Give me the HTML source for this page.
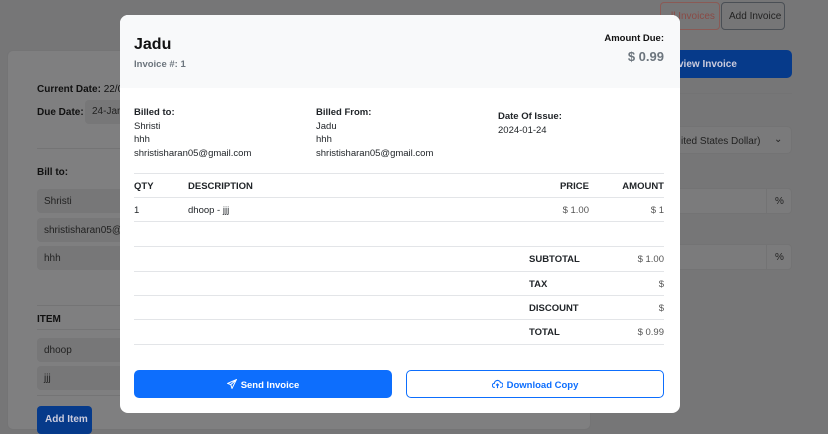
<!DOCTYPE html>
<html style="background:#767677"><head><style>
*{box-sizing:border-box;margin:0;padding:0}
body{width:828px;height:422px;overflow:hidden;background:#767677;font-family:"Liberation Sans",sans-serif;position:relative;font-size:10px;color:#212529}
.a{position:absolute;white-space:nowrap}
.bg{left:0;top:0;width:828px;height:422px;background:#767677}
.card{left:7px;top:50px;width:584px;height:380px;background:#7f7f80;border-radius:6px;border:1px solid #747475}
.lbl{font-weight:bold;color:#111;font-size:10px}
.inp{background:#777778;border-radius:4px;color:#222;font-size:10px;padding:7px;overflow:hidden}
.modal{left:120px;top:15px;width:560px;height:398px;background:#fff;border-radius:8px;overflow:hidden}
.hd{position:absolute;left:0;top:0;width:560px;height:73px;background:#f8f9fa}
.m{position:absolute;font-size:9.5px;color:#212529;white-space:nowrap}
.b{font-weight:bold}
.ln{position:absolute;left:14px;width:530px;height:1px;background:#e3e5e8}
.r{text-align:right}
</style></head><body>
<div class="a bg"></div>
<div class="a card"></div>
<div class="a lbl" style="left:37px;top:84px">Current Date: <span style="font-weight:normal">22/01</span></div>
<div class="a lbl" style="left:37px;top:107px">Due Date:</div>
<div class="a inp" style="left:85px;top:100px;width:40px;height:24px;padding:6px 7px">24-Jan</div>
<div class="a" style="left:37px;top:148px;width:90px;height:1px;background:#747475"></div>
<div class="a lbl" style="left:37px;top:167px">Bill to:</div>
<div class="a inp" style="left:37px;top:189px;width:90px;height:24px">Shristi</div>
<div class="a inp" style="left:37px;top:218px;width:90px;height:24px">shristisharan05@g</div>
<div class="a inp" style="left:37px;top:246px;width:90px;height:24px">hhh</div>
<div class="a" style="left:37px;top:305px;width:90px;height:1px;background:#747475"></div>
<div class="a lbl" style="left:37px;top:314px">ITEM</div>
<div class="a" style="left:37px;top:329px;width:90px;height:1px;background:#747475"></div>
<div class="a inp" style="left:37px;top:338px;width:90px;height:24px">dhoop</div>
<div class="a inp" style="left:37px;top:366px;width:90px;height:24px">jjj</div>
<div class="a" style="left:37px;top:395px;width:90px;height:1px;background:#747475"></div>
<div class="a" style="left:37px;top:406px;width:55px;height:28px;background:#063a8a;border-radius:4px;color:#ccd;font-weight:bold;padding:8px 8px">Add Item</div>

<div class="a" style="left:660px;top:2px;width:60px;height:28px;border:1px solid #8a5a55;border-radius:4px;color:#8a4a45;padding:8px 0 0 10px">ll Invoices</div>
<div class="a" style="left:721px;top:2px;width:64px;height:28px;border:1px solid #4a4f55;border-radius:4px;color:#222;padding:8px 0 0 7px">Add Invoice</div>
<div class="a" style="left:660px;top:50px;width:132px;height:28px;background:#063a8a;border-radius:5px;color:#ccd;font-weight:bold;padding:9px 0 0 18px">view Invoice</div>
<div class="a" style="left:660px;top:93px;width:132px;height:1px;background:#737374"></div>
<div class="a" style="left:660px;top:126px;width:132px;height:28px;background:#7a7a7b;border:1px solid #737374;border-radius:5px;color:#222;padding:9px 0 0 20px">ited States Dollar)<span style="position:absolute;left:113px;top:7px">&#8964;</span></div>
<div class="a" style="left:660px;top:188px;width:132px;height:26px;border:1px solid #737374;border-radius:4px;background:#7b7b7c"><div style="position:absolute;left:105px;top:0;width:26px;height:24px;border-left:1px solid #737374;text-align:center;padding-top:7px;color:#222">%</div></div>
<div class="a" style="left:660px;top:244px;width:132px;height:26px;border:1px solid #737374;border-radius:4px;background:#7b7b7c"><div style="position:absolute;left:105px;top:0;width:26px;height:24px;border-left:1px solid #737374;text-align:center;padding-top:7px;color:#222">%</div></div>

<div class="a modal">
<div class="hd"></div>
<div class="m b" style="left:14px;top:21px;font-size:16px;color:#111">Jadu</div>
<div class="m b" style="left:14px;top:44px;color:#6c757d">Invoice #: 1</div>
<div class="m b r" style="right:16px;top:18px;color:#111">Amount Due:</div>
<div class="m b r" style="right:16px;top:34px;font-size:13px;color:#6c757d">$ 0.99</div>

<div class="m" style="left:14px;top:91px;line-height:13.5px"><b>Billed to:</b><br>Shristi<br>hhh<br>shristisharan05@gmail.com</div>
<div class="m" style="left:196px;top:91px;line-height:13.5px"><b>Billed From:</b><br>Jadu<br>hhh<br>shristisharan05@gmail.com</div>
<div class="m" style="left:378px;top:95px;line-height:13.5px"><b>Date Of Issue:</b><br>2024-01-24</div>

<div class="ln" style="top:158px"></div>
<div class="m b" style="left:14px;top:166px">QTY</div>
<div class="m b" style="left:68px;top:166px">DESCRIPTION</div>
<div class="m b r" style="right:91px;top:166px">PRICE</div>
<div class="m b r" style="right:16px;top:166px">AMOUNT</div>
<div class="ln" style="top:182px"></div>
<div class="m" style="left:14px;top:190px">1</div>
<div class="m" style="left:68px;top:190px">dhoop - jjj</div>
<div class="m r" style="right:91px;top:190px;color:#555">$ 1.00</div>
<div class="m r" style="right:16px;top:190px;color:#555">$ 1</div>
<div class="ln" style="top:206px"></div>
<div class="ln" style="top:231px"></div>
<div class="m b" style="left:409px;top:239px">SUBTOTAL</div>
<div class="m r" style="right:16px;top:239px;color:#555">$ 1.00</div>
<div class="ln" style="top:256px"></div>
<div class="m b" style="left:409px;top:264px">TAX</div>
<div class="m r" style="right:16px;top:264px;color:#555">$</div>
<div class="ln" style="top:280px"></div>
<div class="m b" style="left:409px;top:288px">DISCOUNT</div>
<div class="m r" style="right:16px;top:288px;color:#555">$</div>
<div class="ln" style="top:304px"></div>
<div class="m b" style="left:409px;top:312px">TOTAL</div>
<div class="m r" style="right:16px;top:312px;color:#555">$ 0.99</div>
<div class="ln" style="top:329px"></div>

<div class="a" style="left:14px;top:355px;width:258px;height:28px;background:#0d6efd;border-radius:5px;color:#fff;font-weight:bold;text-align:center;padding-top:9px;font-size:9.5px">
<svg width="10" height="10" viewBox="0 0 16 16" style="vertical-align:-1px;margin-right:4px"><path d="M15 1L1 7l5 2 2 6 7-14zM6 9l9-8" fill="none" stroke="#fff" stroke-width="1.6"/></svg>Send Invoice</div>
<div class="a" style="left:286px;top:355px;width:258px;height:28px;border:1px solid #0d6efd;border-radius:5px;color:#0d6efd;font-weight:bold;text-align:center;padding-top:8px;font-size:9.5px">
<svg width="11" height="10" viewBox="0 0 16 14" style="vertical-align:-1px;margin-right:4px"><path d="M4 12H3.5a3 3 0 010-6 4.5 4.5 0 018.8-1A3 3 0 0112.5 12H12M8 7v6M6 9l2-2 2 2" fill="none" stroke="#0d6efd" stroke-width="1.6"/></svg>Download Copy</div>
</div>
</body></html>
